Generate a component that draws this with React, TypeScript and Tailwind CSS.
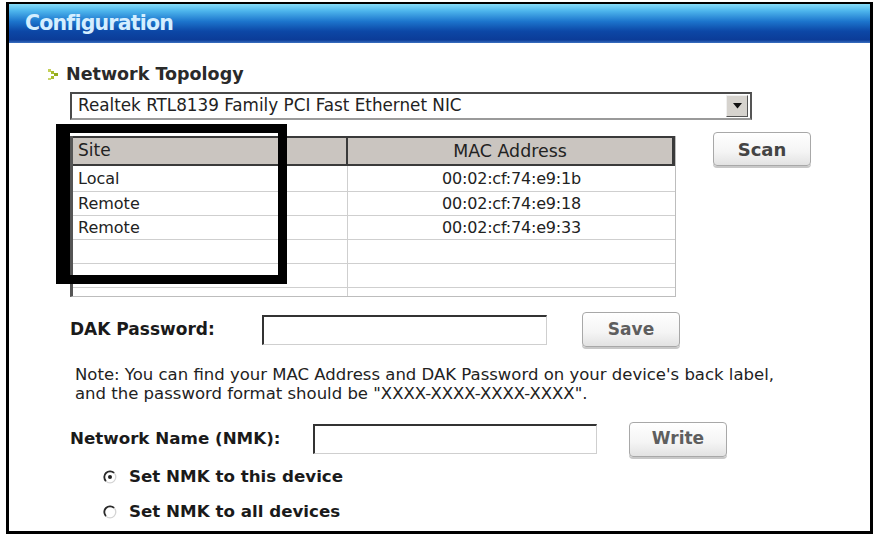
import React from "react";

const font = { fontFamily: '"DejaVu Sans", Verdana, sans-serif' };

function Btn({ label, className }: { label: string; className: string }) {
  return (
    <div
      className={`flex items-center justify-center rounded-[4px] border border-[#a8a8a8] bg-[linear-gradient(to_bottom,#ffffff_0%,#f4f4f4_60%,#e2e2e2_100%)] shadow-[0_2px_0_#c8c8c8] text-[17px] font-bold text-[#5e5e5e] ${className}`}
    >
      {label}
    </div>
  );
}

function Radio({ checked }: { checked?: boolean }) {
  return (
    <svg width="14" height="14" viewBox="0 0 14 14">
      <circle cx="7" cy="7" r="5.8" fill="#fff" stroke="#d4d4d4" strokeWidth="1.3" />
      <path d="M2.9 11.1 A5.8 5.8 0 0 1 11.1 2.9" fill="none" stroke="#2a2a2a" strokeWidth="1.8" />
      {checked && <circle cx="7" cy="7" r="2" fill="#222" />}
    </svg>
  );
}

export default function App() {
  const rows = [
    ["Local", "00:02:cf:74:e9:1b"],
    ["Remote", "00:02:cf:74:e9:18"],
    ["Remote", "00:02:cf:74:e9:33"],
    ["", ""],
    ["", ""],
    ["", ""],
  ];
  return (
    <div className="relative w-[879px] h-[540px] bg-white text-[#222]" style={font}>
      <div className="ml-[6px] pt-[2px]">
        <div className="w-[867px] h-[532px] border-[3px] border-t-2 border-black flex flex-col">
          {/* Header */}
          <div className="h-[39px] flex items-center pl-[16px] bg-[linear-gradient(to_bottom,#86dcf8_0%,#4cb4ec_18%,#1c74cc_45%,#0c47a6_70%,#0b3c98_92%,#3a70c0_100%)]">
            <span className="text-[20.5px] font-bold text-[#d4eeff] tracking-[-0.8px]">Configuration</span>
          </div>

          {/* Body */}
          <div className="flex flex-col">
            <div className="mt-[21px] ml-[38px] flex items-center gap-[7px] h-[20px]">
              <svg width="12" height="13" viewBox="0 0 12 13">
                <rect x="1" y="1" width="3" height="3" fill="#c4d058" />
                <rect x="4" y="3" width="3" height="3" fill="#a8bc30" />
                <rect x="7" y="5" width="4" height="3" fill="#94ac1c" />
                <rect x="4" y="8" width="3" height="3" fill="#a8bc30" />
                <rect x="1" y="10" width="3" height="2" fill="#c8d468" />
              </svg>
              <span className="text-[17.5px] font-bold text-[#2a2a2a]">Network Topology</span>
            </div>

            {/* Select */}
            <div className="mt-[8px] ml-[61px] w-[682px] h-[28px] flex border-2 border-[#4a4a4a] border-r-[#555] border-b-[#9a9a9a] bg-white">
              <div className="flex-1 flex items-center pl-[6px] text-[16.8px] text-[#222]">
                Realtek RTL8139 Family PCI Fast Ethernet NIC
              </div>
              <div className="w-[22px] my-[1px] mr-[2px] flex items-center justify-center bg-[#d6d3ce] border border-[#f0f0f0] border-r-[#555] border-b-[#555]">
                <svg width="9" height="6" viewBox="0 0 9 6">
                  <path d="M0 0 H9 L4.5 5.5 Z" fill="#111" />
                </svg>
              </div>
            </div>

            {/* Table + Scan */}
            <div className="mt-[16px] flex items-start">
              <div className="ml-[61px] w-[606px] h-[161px] flex flex-col border-l-[3px] border-l-[#555] border-r border-r-[#bdbdbd] border-b border-b-[#bdbdbd] overflow-hidden">
                <div className="h-[30px] shrink-0 flex bg-[#cac5c0] border-t-2 border-b-2 border-[#3a3a3a] border-r-[3px]">
                  <div className="w-[275px] flex items-center pl-[5px] text-[17px] border-r-2 border-[#3a3a3a]">Site</div>
                  <div className="flex-1 flex items-center justify-center text-[17.4px]">MAC Address</div>
                </div>
                {rows.map((r, i) => (
                  <div
                    key={i}
                    className={`${i === 0 ? "h-[26px]" : "h-[24px]"} shrink-0 flex border-b border-[#cfcfcf] text-[16px]`}
                  >
                    <div className="w-[275px] flex items-center pl-[5px] border-r border-[#cfcfcf]">{r[0]}</div>
                    <div className="flex-1 flex items-center justify-center tracking-[-0.2px]">{r[1]}</div>
                  </div>
                ))}
              </div>
              <Btn label="Scan" className="ml-[37px] mt-[-4px] w-[98px] h-[34px] text-[18px] text-[#444]" />
            </div>

            {/* DAK */}
            <div className="mt-[14px] flex items-center h-[37px]">
              <span className="ml-[61px] w-[192px] text-[17px] font-bold text-[#1a1a1a]">DAK Password:</span>
              <div className="w-[285px] h-[30px] border-2 border-[#333] border-r border-b border-r-[#cfcfcf] border-b-[#cfcfcf] bg-white" />
              <Btn label="Save" className="ml-[35px] w-[98px] h-[35px]" />
            </div>

            {/* Note */}
            <div className="mt-[17px] ml-[66px] text-[16.5px] leading-[19px] text-[#222]">
              <div>Note: You can find your MAC Address and DAK Password on your device's back label,</div>
              <div>and the password format should be "XXXX-XXXX-XXXX-XXXX".</div>
            </div>

            {/* NMK */}
            <div className="mt-[18px] flex items-center h-[36px]">
              <span className="ml-[61px] w-[243px] text-[16.7px] font-bold text-[#1a1a1a]">Network Name (NMK):</span>
              <div className="w-[284px] h-[30px] border-2 border-[#333] border-r border-b border-r-[#cfcfcf] border-b-[#cfcfcf] bg-white" />
              <Btn label="Write" className="ml-[32px] w-[98px] h-[35px]" />
            </div>

            {/* Radios */}
            <div className="mt-[9px] ml-[94px] flex items-center gap-[12px] h-[22px]">
              <Radio checked />
              <span className="text-[16.7px] font-bold text-[#1a1a1a]">Set NMK to this device</span>
            </div>
            <div className="mt-[13px] ml-[94px] flex items-center gap-[12px] h-[22px]">
              <Radio />
              <span className="text-[16.7px] font-bold text-[#1a1a1a]">Set NMK to all devices</span>
            </div>
          </div>
        </div>
      </div>

      {/* Annotation rectangle */}
      <div className="absolute left-[56px] top-[124px] w-[231px] h-[160px] border-[9px] border-l-[14px] border-black" />
    </div>
  );
}
